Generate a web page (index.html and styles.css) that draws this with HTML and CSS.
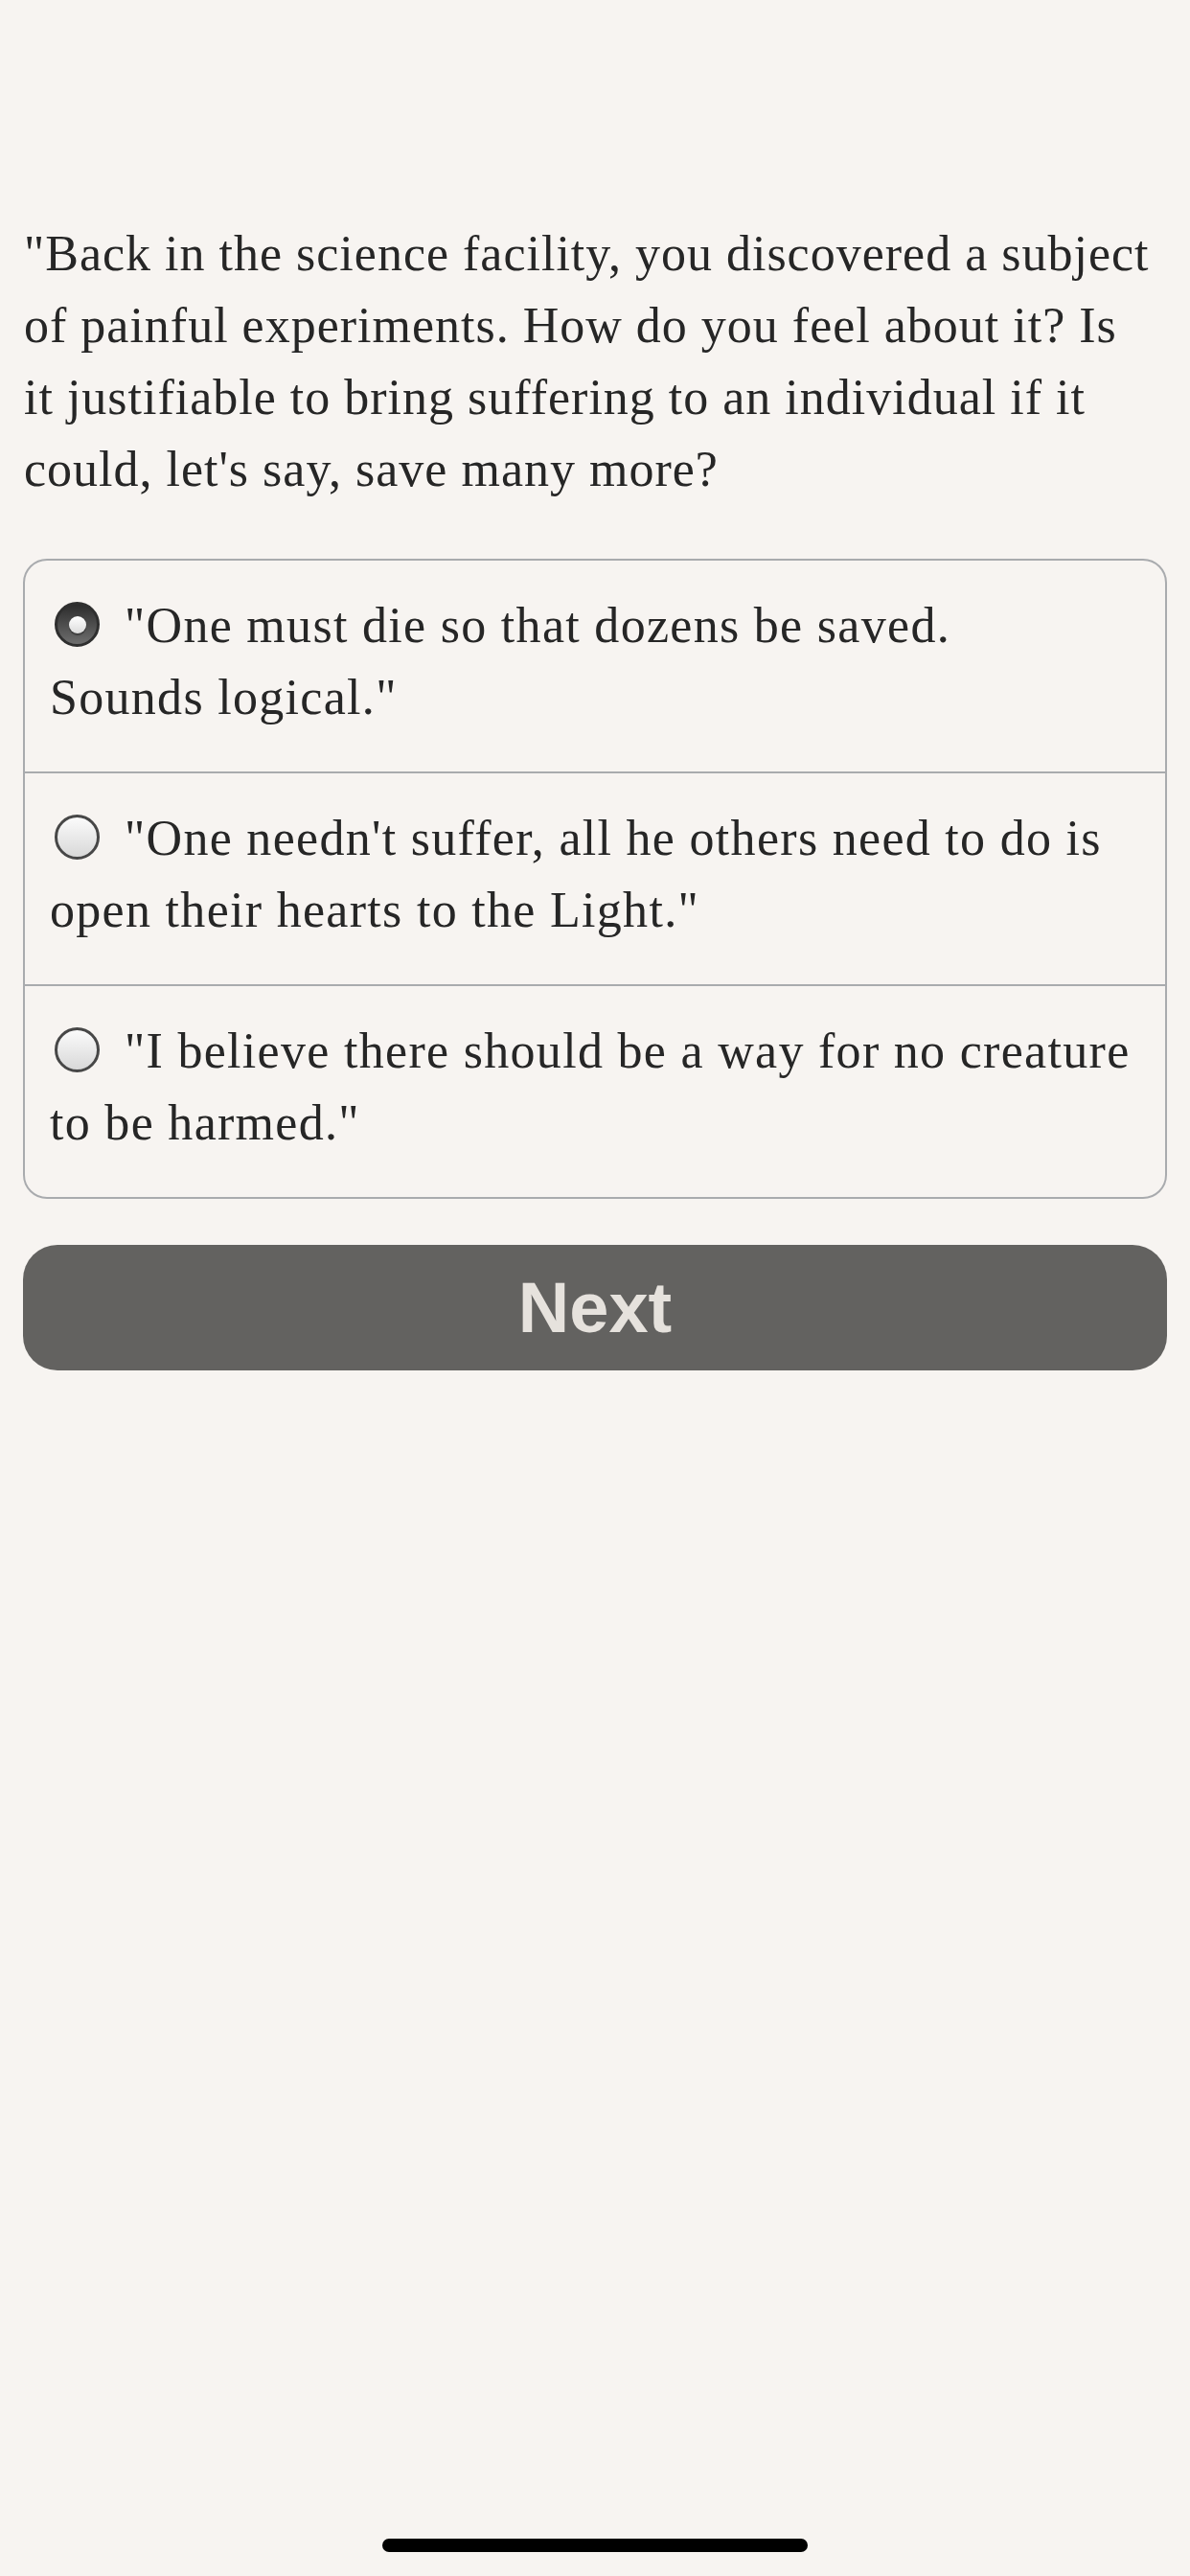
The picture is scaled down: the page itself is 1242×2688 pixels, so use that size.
FILE: index.html
```html
<!DOCTYPE html>
<html lang="en">

<head>
    <meta charset="UTF-8" />
    <meta name="viewport" content="width=device-width, initial-scale=1" />
    <title>Question</title>
    <link rel="stylesheet" href="styles.css">
</head>

<body>

    <div class="page">
        <p class="question">"Back in the science facility, you discovered a subject of painful experiments. How do you feel about it? Is it justifiable to bring suffering to an individual if it could, let's say, save many more?</p>

        <div class="choices">
            <div class="choice">
                <span class="radio checked"></span>"One must die so that dozens be saved.<br>Sounds logical."
            </div>
            <div class="choice">
                <span class="radio"></span>"One needn't suffer, all he others need to do is open their hearts to the Light."
            </div>
            <div class="choice">
                <span class="radio"></span>"I believe there should be a way for no creature to be harmed."
            </div>
        </div>

        <button class="next">Next</button>

        <div class="home-bar"></div>
    </div>

</body>

</html>
```

FILE: styles.css
```css
html,
body {
    margin: 0;
    padding: 0;
    background-color: #f7f4f1;
}

.page {
    display: flex;
    flex-direction: column;
    height: 2688px;
    padding: 0 24px;
    box-sizing: border-box;
    font-family: "Liberation Serif", "Times New Roman", serif;
    color: #262626;
}

.question {
    margin: 227px 0 0 0;
    padding-left: 1px;
    width: 1182px;
    font-size: 52px;
    line-height: 75px;
    letter-spacing: 1px;
}

.choices {
    margin-top: 56px;
    border: 2px solid #a9abae;
    border-radius: 25px;
}

.choice {
    padding: 30px 24px 40px 26px;
    font-size: 52px;
    line-height: 75px;
    letter-spacing: 1.3px;
}

.choice + .choice {
    border-top: 2px solid #a9abae;
}

.radio {
    position: relative;
    display: inline-block;
    width: 47px;
    height: 47px;
    margin: 0 26px 0 5px;
    box-sizing: border-box;
    border: 3px solid #474747;
    border-radius: 50%;
    background: linear-gradient(#fbfbfb, #d8d8d8);
    vertical-align: -5px;
}

.radio.checked {
    border-color: #2f2f2f;
    background: linear-gradient(#2c2c2c, #6e6e6e);
}

.radio.checked::after {
    content: "";
    position: absolute;
    left: 12px;
    top: 12px;
    width: 18px;
    height: 18px;
    border-radius: 50%;
    background: linear-gradient(#ffffff, #dcdcdc);
    box-shadow: 0 2px 1px rgba(0, 0, 0, 0.35);
}

.next {
    margin-top: 48px;
    height: 131px;
    border: none;
    border-radius: 36px;
    background: #636260;
    color: #e6e2dd;
    font-family: "Liberation Sans", Arial, sans-serif;
    font-weight: bold;
    font-size: 74px;
}

.home-bar {
    margin: auto auto 25px auto;
    width: 444px;
    height: 14px;
    border-radius: 7px;
    background: #000;
}
```
